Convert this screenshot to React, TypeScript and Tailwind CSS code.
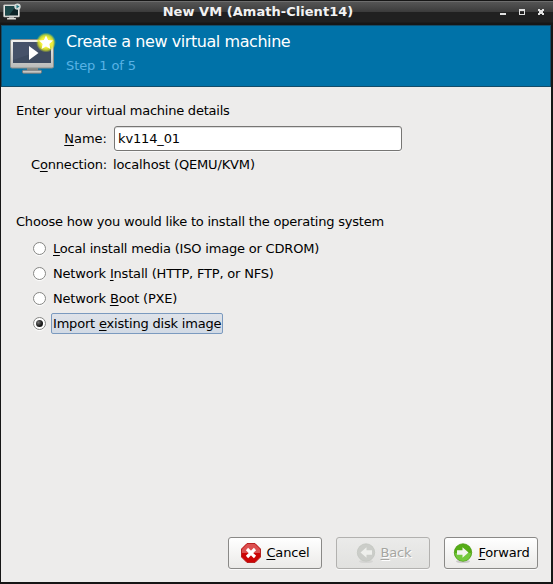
import type { ReactNode } from "react";

function Key({ children }: { children: ReactNode }) {
  return <span className="underline decoration-1 underline-offset-2 [text-decoration-skip-ink:none]">{children}</span>;
}

function TitleIcon() {
  return (
    <svg width="20" height="20" viewBox="0 0 20 20">
      <rect x="0.5" y="1.8" width="16" height="12.2" rx="0.8" fill="#e6e6e2" stroke="#aaa" strokeWidth="0.6" />
      <rect x="2" y="3" width="13" height="9.5" fill="#0d2327" />
      <path d="M2 3h11L6 12.500H2z" fill="#23595a" opacity=".7" />
      <path d="M6 14h5v1.500H6z" fill="#aaa" />
      <rect x="4" y="15" width="9" height="1.6" rx=".6" fill="#deded9" />
      <circle cx="14.5" cy="3.6" r="3.2" fill="#d5dcda" />
      <path d="M13.5 1.8l3 1.8-3 1.8z" fill="#257880" />
    </svg>
  );
}

function MonitorIcon() {
  return (
    <svg width="46" height="44" viewBox="0 0 46 44">
      <defs>
        <radialGradient id="glow">
          <stop offset="0.5" stopColor="#f4f23a" />
          <stop offset="0.75" stopColor="#e3e820" stopOpacity=".8" />
          <stop offset="1" stopColor="#c8e020" stopOpacity="0" />
        </radialGradient>
        <linearGradient id="frame" x2="0" y2="1">
          <stop stopColor="#f4f4f2" />
          <stop offset="1" stopColor="#b9bab8" />
        </linearGradient>
      </defs>
      <path d="M17 36h11v3H17z" fill="#888a85" />
      <rect x="12.5" y="38.200" width="19" height="3" rx="1" fill="#c6c7c4" stroke="#777" />
      <rect x="0.5" y="7.5" width="43" height="28.500" rx="1.5" fill="url(#frame)" stroke="#8c8e8a" />
      <rect x="3" y="10" width="38" height="21" fill="#3e4b60" />
      <path d="M3 10h38v5L3 28z" fill="#55627a" opacity=".35" />
      <path d="M19 14v14L28.5 21z" fill="#fff" />
      <circle cx="36" cy="10.5" r="10" fill="url(#glow)" />
      <path d="M36 3.5l2.1 4.5 4.900.6-3.6 3.4 1 4.9-4.4-2.4-4.4 2.4 1-4.9L29 8.600l4.900-.6z" fill="#fff" />
    </svg>
  );
}

function CancelIcon() {
  return (
    <svg width="20" height="20" viewBox="0 0 20 20" className="shrink-0">
      <path d="M6 .5h8L19.500 6v8L14 19.500H6L.5 14V6z" fill="#cc0505" stroke="#b52222" />
      <path d="M6.200 1h7.600L19 6.200V10H1V6.200z" fill="#dc5050" />
      <path d="M6 6l8 8m0-8l-8 8" stroke="#fff" strokeWidth="3.200" />
    </svg>
  );
}

function ArrowIcon({ back = false }: { back?: boolean }) {
  return (
    <svg width="20" height="21" viewBox="0 0 20 21" className="shrink-0">
      <ellipse cx="10" cy="18.500" rx="7" ry="1.600" fill="#777" opacity={back ? 0.12 : 0.3} />
      <circle cx="10" cy="9.500" r="8.700" fill={back ? "#cbcdc9" : "#55ad16"} stroke={back ? "#c3c6c0" : "#4b9a12"} strokeWidth=".8" />
      {!back && <path d="M2 10a8 8 0 0 0 16 0z" fill="#7bd047" opacity=".8" />}
      <path
        d="M4 7.200h5.500V4.200l6 5.300-6 5.300v-3H4z"
        fill={back ? "#eeefec" : "#f2f4f0"}
        transform={back ? "translate(20 0) scale(-1 1)" : undefined}
      />
    </svg>
  );
}

function ActionButton({ icon, children, disabled = false }: { icon: ReactNode; children: ReactNode; disabled?: boolean }) {
  return (
    <button
      disabled={disabled}
      className={
        "flex h-8 w-[94px] items-center justify-center gap-[5px] rounded-[3px] border pl-px tracking-[-0.15px] shadow-[0_1px_0_#fafafa] " +
        (disabled
          ? "border-[#b2b1af] bg-linear-to-b from-[#ebebea] to-[#e1e1df] text-[#a5a5a1] [text-shadow:1px_1px_0_#fff]"
          : "border-[#8a8987] bg-linear-to-b from-white to-[#ebeae8]")
      }
    >
      {icon}
      <span className="leading-4">{children}</span>
    </button>
  );
}

function Option({ children, checked = false }: { children: ReactNode; checked?: boolean }) {
  return (
    <div className="flex h-[25px] items-center">
      <span className="flex size-[13px] items-center justify-center rounded-full border border-[#858583] bg-white shadow-[0_1px_1px_#fff]">
        {checked && <span className="size-[7px] rounded-full bg-[radial-gradient(circle_at_35%_35%,#777,#151515_60%)]" />}
      </span>
      <span
        className={
          "ml-[5px] flex h-[21px] items-center rounded-[2px] border px-px leading-4 tracking-[-0.19px] " +
          (checked ? "border-[#7b9abf] bg-linear-to-b from-[#dfe3e9] to-[#d2dae5]" : "border-transparent")
        }
      >
        <span>{children}</span>
      </span>
    </div>
  );
}

export default function App() {
  return (
    <div className="flex h-[584px] w-[553px] flex-col overflow-hidden bg-[#161616] font-['DejaVu_Sans',sans-serif] text-[13px] leading-4 text-black">
      <div className="flex h-[25px] shrink-0 items-start border-t border-[#161616] bg-[linear-gradient(to_bottom,#858585_0,#555_1px,#3b3b3b_11px,#202020_11px,#202020_21px,#161616_22px)]">
        <div className="w-[60px] pt-[2px] pl-[3px]"><TitleIcon /></div>
        <div className="flex-1 pt-[3px] pr-[4px] text-center font-bold tracking-[0.04px] text-[#f2f2f2]">New VM (Amath-Client14)</div>
        <svg width="93" height="24" viewBox="0 0 93 24" fill="#e0e0e0">
          <path d="M40 12h6v2h-6z" />
          <path fillRule="evenodd" d="M59 8h6v6h-6zM60 10v3h4v-3z" />
          <path d="M78 8h2v1h2V8h2v2h-1v2h1v2h-2v-1h-2v1h-2v-2h1v-2h-1z" />
        </svg>
      </div>

      <div className="mr-[2px] mb-[2px] ml-px flex flex-1 flex-col bg-[#edeceb]">
        <div className="flex h-[62px] shrink-0 border border-[#124c69] bg-[#0072a8]">
          <div className="ml-[8px] pt-[6px]"><MonitorIcon /></div>
          <div className="ml-[10px] pt-[6px]">
            <div className="text-[16px] leading-5 tracking-[-0.43px] text-white">Create a new virtual machine</div>
            <div className="mt-[6px] tracking-[-0.1px] text-[#59b2e5]">Step 1 of 5</div>
          </div>
        </div>

        <div className="flex flex-1 flex-col pl-[15px]">
          <div className="mt-[16px] tracking-[-0.23px]">Enter your virtual machine details</div>
          <div className="mt-[7px] flex h-[25px] items-center">
            <div className="w-[91px] text-right"><Key>N</Key>ame:</div>
            <div className="ml-[7px] flex h-[25px] w-[288px] items-center rounded-[3px] border border-[#777674] bg-white pl-[3px] tracking-[-0.15px] shadow-[inset_0_1px_0_#ddd,0_1px_0_#f8f8f8]">kv114_01</div>
          </div>
          <div className="mt-[6px] flex">
            <div className="w-[91px] text-right tracking-[-0.18px]">C<Key>o</Key>nnection:</div>
            <div className="ml-[6px] tracking-[-0.15px]">localhost (QEMU/KVM)</div>
          </div>
          <div className="mt-[41px] tracking-[-0.21px]">Choose how you would like to install the operating system</div>
          <div className="mt-[6px] ml-[17px]">
            <Option><Key>L</Key>ocal install media (ISO image or CDROM)</Option>
            <Option>Network <Key>I</Key>nstall (HTTP, FTP, or NFS)</Option>
            <Option>Network <Key>B</Key>oot (PXE)</Option>
            <Option checked>Import <Key>e</Key>xisting disk image</Option>
          </div>
        </div>

        <div className="mr-[13px] mb-[13px] flex justify-end gap-[14px]">
          <ActionButton icon={<CancelIcon />}><Key>C</Key>ancel</ActionButton>
          <ActionButton disabled icon={<ArrowIcon back />}><Key>B</Key>ack</ActionButton>
          <ActionButton icon={<ArrowIcon />}><Key>F</Key>orward</ActionButton>
        </div>
      </div>
    </div>
  );
}
